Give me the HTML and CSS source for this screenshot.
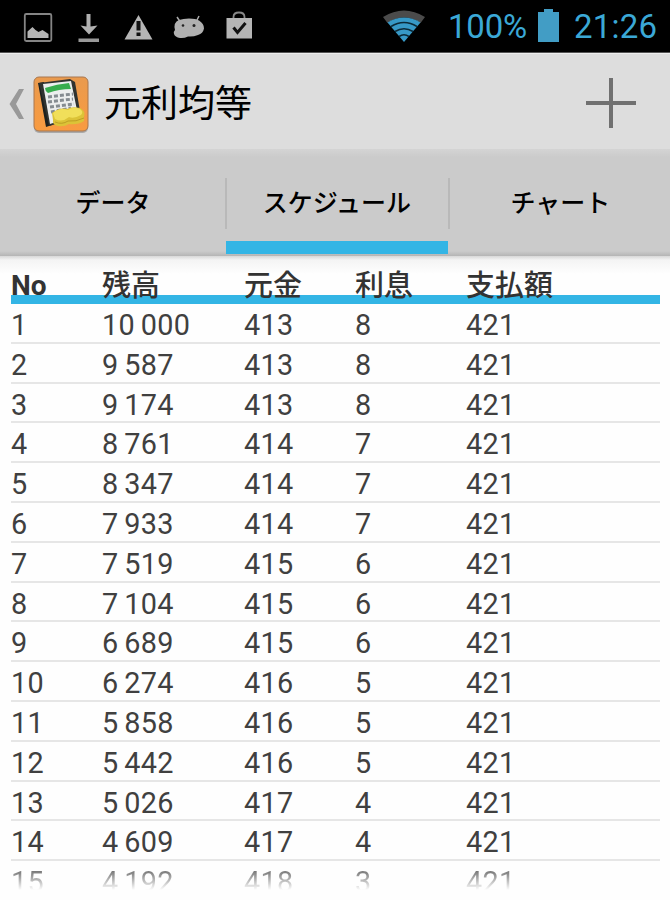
FILE: index.html
```html
<!DOCTYPE html>
<html lang="ja">
<head>
<meta charset="utf-8">
<title>元利均等</title>
<link rel="stylesheet" href="styles.css">
</head>
<body>
<header class="status">
  <svg class="notices" viewBox="0 0 270 52" width="270" height="52">
    <rect x="24.8" y="14" width="26.5" height="27" rx="1.5" fill="none" stroke="#858585" stroke-width="1.8"/>
    <path d="M27.500 38V31.500l5-4.500 3 3 3 2 4-2 6 4v4z" fill="#b5b5b5"/>
    <path d="M86.500 14h4v12.500l7-1-8.500 9-8.500-9 6 1z" fill="#b0b0b0"/><rect x="78.500" y="38.500" width="20.500" height="3.500" fill="#999"/>
    <path d="M138.500 15l14 24.500h-28z" fill="#b5b5b5"/>
    <path d="M138.500 21v9.500M138.500 32.500v3.500" stroke="#111" stroke-width="4"/>
    <path d="M177 17l4 6M199 16l-3 6" stroke="#aaa" stroke-width="1.500"/>
    <path d="M179 20q4-1.500 10-1.500 7 0 10 2 5 3 5 8-1 5-6 6.500-5 2-10 1.500-4 2-8 1.500-5-1-6-4-1-2 1-4-2-7.500 4-10z" fill="#b0b0b0"/>
    <circle cx="183" cy="25.500" r="1.300" fill="#222"/><circle cx="194" cy="25.500" r="1.500" fill="#222"/>
    <path d="M233.500 19v-2q0-4.500 5.500-4.500t5.500 4.500v2" fill="none" stroke="#888" stroke-width="1.800"/>
    <rect x="226.500" y="18" width="25.500" height="20.500" fill="#b5b5b5"/>
    <path d="M233.500 27.500l4 5 8-9.500" fill="none" stroke="#111" stroke-width="3"/>
  </svg>
  <svg class="wifi" viewBox="0 0 44 34" width="44" height="34">
    <path d="M1 8Q22-5 43 8l-4.500 6Q22 3 5.500 14z" fill="#4b4b4b"/>
    <path d="M5.500 13.500Q22 3.500 38.500 13.500L22 33z" fill="#3799c7"/>
    <path d="M9 17.500Q22 9.500 35 17.500M13 22.500Q22 17 31 22.500M17 27.500Q22 24 27 27.500" fill="none" stroke="#0c2a38" stroke-width="1.600"/>
  </svg>
  <span class="percent">100%</span>
  <svg class="battery" viewBox="0 0 22 34" width="22" height="34"><path d="M0 3h6V0h9v3h6v30H0z" fill="#429dc5"/></svg>
  <span class="clock">21:26</span>
</header>
<div class="actionbar">
  <svg class="back" viewBox="0 0 16 32" width="16" height="32"><path d="M10 1h5L7 16l8 15h-5L.5 16z" fill="#999"/></svg>
  <svg class="appicon" viewBox="0 0 58 60" width="58" height="60">
    <defs><linearGradient id="orange" x2="0" y2="1"><stop stop-color="#e99a4e"/><stop offset="1" stop-color="#f99b40"/></linearGradient></defs>
    <rect x="2" y="4" width="54" height="54" rx="5" fill="#777" opacity=".5"/>
    <rect x="2" y="2" width="54" height="54" rx="5" fill="url(#orange)" stroke="#a77750" stroke-width="1"/>
    <path d="M6 8l6-1 8 43-6 2z" fill="#1d211f"/>
    <path d="M7 8l31-4 5 3 6 35-32 9z" fill="#303330"/>
    <path d="M11 9l28-3 7 34-28 9z" fill="#eceeee"/>
    <path d="M13 13q12-4 24-5l2 6q-12 0-23 4-3-2-3-5z" fill="#37ad4d"/>
    <path d="M16 22l25-3M16 27l25-3M18 32l24-3M19 37l20-4" stroke="#858c91" stroke-width="3" stroke-dasharray="4 2"/>
    <path d="M20 38q8-6 15-4 5-3 13-1 6 3 4 9v4q-6 4-15 3-5 3-11 2-6-1-5-6z" fill="#dcc337"/>
    <path d="M21 38q7-6 15-3 6-4 12-1 4 3 1 6-7 4-12 2-7 6-14 2z" fill="#f1df5a"/>
    <path d="M23 47q7 3 13-1 8 1 16-3" fill="none" stroke="#bd9f24" stroke-width="1"/>
  </svg>
  <h1 class="title">元利均等</h1>
  <svg class="add" viewBox="0 0 50 50" width="50" height="50"><path d="M25 0v50M0 25h50" stroke="#707070" stroke-width="4"/></svg>
</div>
<nav class="tabs">
  <div class="tab">データ</div>
  <div class="tab active">スケジュール</div>
  <div class="tab">チャート</div>
</nav>
<main class="schedule">
  <div class="head"><span>No</span><span>残高</span><span>元金</span><span>利息</span><span>支払額</span></div>
  <div class="row"><span>1</span><span>10 000</span><span>413</span><span>8</span><span>421</span></div>
  <div class="row"><span>2</span><span>9 587</span><span>413</span><span>8</span><span>421</span></div>
  <div class="row"><span>3</span><span>9 174</span><span>413</span><span>8</span><span>421</span></div>
  <div class="row"><span>4</span><span>8 761</span><span>414</span><span>7</span><span>421</span></div>
  <div class="row"><span>5</span><span>8 347</span><span>414</span><span>7</span><span>421</span></div>
  <div class="row"><span>6</span><span>7 933</span><span>414</span><span>7</span><span>421</span></div>
  <div class="row"><span>7</span><span>7 519</span><span>415</span><span>6</span><span>421</span></div>
  <div class="row"><span>8</span><span>7 104</span><span>415</span><span>6</span><span>421</span></div>
  <div class="row"><span>9</span><span>6 689</span><span>415</span><span>6</span><span>421</span></div>
  <div class="row"><span>10</span><span>6 274</span><span>416</span><span>5</span><span>421</span></div>
  <div class="row"><span>11</span><span>5 858</span><span>416</span><span>5</span><span>421</span></div>
  <div class="row"><span>12</span><span>5 442</span><span>416</span><span>5</span><span>421</span></div>
  <div class="row"><span>13</span><span>5 026</span><span>417</span><span>4</span><span>421</span></div>
  <div class="row"><span>14</span><span>4 609</span><span>417</span><span>4</span><span>421</span></div>
  <div class="row last"><span>15</span><span>4 192</span><span>418</span><span>3</span><span>421</span></div>
</main>
</body>
</html>
```
FILE: styles.css
```css
* { box-sizing: border-box; }
body {
  margin: 0;
  height: 900px;
  overflow: hidden;
  background: #fefefe;
  font-family: Roboto, "Noto Sans CJK JP", sans-serif;
  color: #333;
}
svg { display: block; flex: none; }
.status {
  display: flex;
  height: 53px;
  background: #000;
  border-bottom: 1px solid #555;
  color: #3ba8d6;
  font-size: 33px;
  line-height: 54px;
  white-space: nowrap;
}
.wifi { margin: 9px 0 0 112px; }
.percent { width: 90px; margin-left: 22px; letter-spacing: -.2px; }
.battery { margin: 9px 0 0 0; }
.clock { margin-left: 14px; letter-spacing: .2px; }
.actionbar {
  display: flex;
  height: 96px;
  background: #ddd;
  border-top: 1px solid #eee;
}
.back { margin: 34px 0 0 9px; }
.appicon { margin: 21px 0 0 7px; }
.title {
  margin: 0 auto 0 14px;
  font-size: 37px;
  font-weight: 400;
  line-height: 101px;
  color: #000;
}
.add { margin: 24px 34px 0 0; }
.tabs {
  display: grid;
  grid-template-columns: 226px 223px 221px;
  height: 107px;
  background: linear-gradient(#d4d4d4, #cbcbcb 8px, #cbcbcb 102px, #b5b5b5);
}
.tab {
  position: relative;
  height: 105px;
  font-size: 25px;
  font-weight: 500;
  line-height: 109px;
  text-align: center;
  color: #000;
}
.tab:last-child { padding-left: 2px; }
.tab + .tab::before {
  content: "";
  position: absolute;
  left: -1px;
  top: 29px;
  width: 2px;
  height: 51px;
  background: #b9b9b9;
}
.active { border-bottom: 13px solid #33b5e5; margin-right: 1px; }
.schedule {
  padding: 0 10px 0 11px;
  background: linear-gradient(#d8d8d8, #f4f4f4 4px, #fefefe 18px);
}
.head, .row {
  display: grid;
  grid-template-columns: 91px 142px 111px 111px 1fr;
  white-space: nowrap;
}
.head {
  height: 48px;
  background: linear-gradient(#33b5e5, #33b5e5) 0 39px / 100% 9px no-repeat;
  font-size: 29px;
  font-weight: 500;
  line-height: 61px;
}
.head span:first-child { font-size: 28px; font-weight: 700; line-height: 60px; }
.row {
  height: 39.8px;
  border-bottom: 2px solid #e6e6e6;
  font-size: 28.8px;
  letter-spacing: .3px;
  word-spacing: -1.6px;
  line-height: 43px;
  color: #404040;
}
.last {
  height: 40px;
  border: 0;
  color: transparent;
  background: linear-gradient(#777 10px, #fefefe 29px);
  background-clip: text;
  -webkit-background-clip: text;
}
```
